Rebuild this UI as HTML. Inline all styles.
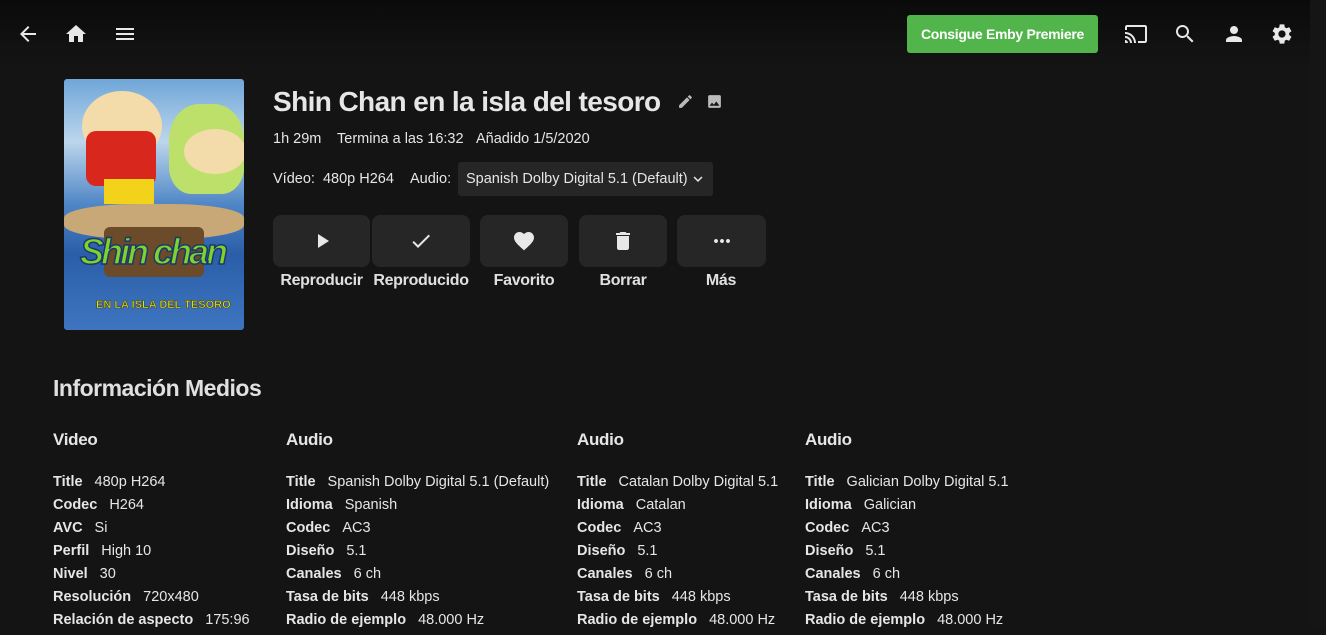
<!DOCTYPE html>
<html><head><meta charset="utf-8"><style>
*{margin:0;padding:0;box-sizing:border-box}
body{width:1326px;height:627px;overflow:hidden;background:#141414;color:#e6e6e6;font-family:"Liberation Sans",sans-serif;position:relative}
.hdr{position:absolute;left:0;top:0;width:1310px;height:70px;background:linear-gradient(#0a0a0a,#111 60%,#141414)}
.strip{position:absolute;left:1310px;top:0;width:16px;height:627px;background:#151515}
.ic{position:absolute;width:24px;height:24px;fill:#e8e8e8}
.ab{position:absolute;white-space:nowrap}
.prem{position:absolute;left:907px;top:15px;width:191px;height:38px;background:#52b54b;border-radius:3px;color:#fff;font-weight:bold;font-size:14px;text-align:center;line-height:38px;letter-spacing:-0.3px}
.btn{position:absolute;top:215px;height:52px;background:#262626;border-radius:8px}
.btn svg{position:absolute;left:50%;top:50%;width:24px;height:24px;margin:-12px 0 0 -12px;fill:#e8e8e8}
.lbl{position:absolute;top:272px;font-size:16px;font-weight:bold;color:#e0e0e0;text-align:center;letter-spacing:-0.3px}
.col{position:absolute;top:430px;font-size:14.5px}
.col h3{font-size:17px;font-weight:bold;margin-bottom:26px;height:18px;letter-spacing:-0.3px}
.col div{height:23px;line-height:17px}
.col b{margin-right:12px}
.m{position:absolute;font-size:14.5px;top:131px}
</style></head><body>
<div class="hdr"></div><div class="strip"></div>
<svg class="ic" style="left:16px;top:22px" viewBox="0 0 24 24"><path d="M20 11H7.83l5.59-5.59L12 4l-8 8 8 8 1.41-1.41L7.83 13H20v-2z"/></svg>
<svg class="ic" style="left:64px;top:22px" viewBox="0 0 24 24"><path d="M10 20v-6h4v6h5v-8h3L12 3 2 12h3v8z"/></svg>
<svg class="ic" style="left:113px;top:22px" viewBox="0 0 24 24"><path d="M3 18h18v-2H3v2zm0-5h18v-2H3v2zm0-7v2h18V6H3z"/></svg>
<div class="prem">Consigue Emby Premiere</div>
<svg class="ic" style="left:1124px;top:22px" viewBox="0 0 24 24"><path d="M21 3H3c-1.1 0-2 .9-2 2v3h2V5h18v14h-7v2h7c1.1 0 2-.9 2-2V5c0-1.1-.9-2-2-2zM1 18v3h3c0-1.66-1.34-3-3-3zm0-4v2c2.76 0 5 2.24 5 5h2c0-3.870-3.13-7-7-7zm0-4v2c4.97 0 9 4.03 9 9h2c0-6.08-4.93-11-11-11z"/></svg>
<svg class="ic" style="left:1173px;top:22px" viewBox="0 0 24 24"><path d="M15.5 14h-.79l-.28-.27C15.41 12.59 16 11.11 16 9.5 16 5.910 13.09 3 9.5 3S3 5.91 3 9.5 5.91 16 9.5 16c1.61 0 3.09-.59 4.230-1.57l.27.28v.79l5 4.99L20.49 19l-4.99-5zm-6 0C7.01 14 5 11.99 5 9.5S7.01 5 9.5 5 14 7.01 14 9.5 11.99 14 9.5 14z"/></svg>
<svg class="ic" style="left:1222px;top:22px" viewBox="0 0 24 24"><path d="M12 12c2.21 0 4-1.79 4-4s-1.79-4-4-4-4 1.79-4 4 1.79 4 4 4zm0 2c-2.67 0-8 1.34-8 4v2h16v-2c0-2.66-5.33-4-8-4z"/></svg>
<svg class="ic" style="left:1270px;top:22px" viewBox="0 0 24 24"><path d="M19.14 12.94c.04-.3.06-.61.06-.94 0-.32-.02-.64-.07-.94l2.03-1.58a.49.49 0 00.12-.61l-1.92-3.32a.488.488 0 00-.59-.22l-2.39.96c-.5-.38-1.03-.7-1.62-.94l-.36-2.54a.484.484 0 00-.48-.41h-3.84c-.24 0-.43.17-.47.41l-.36 2.54c-.59.24-1.130.57-1.62.94l-2.39-.96c-.22-.08-.47 0-.59.22L2.740 8.87c-.12.21-.08.47.12.61l2.03 1.58c-.05.3-.09.63-.09.94s.02.64.07.94l-2.03 1.58a.49.49 0 00-.12.61l1.92 3.32c.12.22.37.29.59.22l2.39-.96c.5.38 1.03.7 1.62.94l.36 2.54c.05.24.24.41.48.41h3.84c.24 0 .44-.17.47-.41l.36-2.54c.59-.24 1.13-.56 1.62-.94l2.39.96c.22.08.47 0 .59-.22l1.92-3.32c.12-.22.07-.47-.12-.61l-2.01-1.58zM12 15.6c-1.98 0-3.6-1.62-3.6-3.6s1.62-3.6 3.6-3.6 3.6 1.62 3.6 3.6-1.62 3.6-3.6 3.6z"/></svg>

<!-- poster -->
<div class="ab" style="left:64px;top:79px;width:180px;height:251px;border-radius:3px;overflow:hidden;background:linear-gradient(#6fa6d8 0%,#bcd6ec 25%,#4f86c6 50%,#2a5ea8 70%,#3f75c0 100%)">
 <div class="ab" style="left:18px;top:12px;width:80px;height:70px;border-radius:50%;background:#f3dcaa"></div>
 <div class="ab" style="left:22px;top:52px;width:70px;height:55px;background:#d8281e;border-radius:10px"></div>
 <div class="ab" style="left:40px;top:100px;width:50px;height:25px;background:#f2d21a"></div>
 <div class="ab" style="left:105px;top:25px;width:75px;height:90px;border-radius:40% 40% 30% 30%;background:#bde06a"></div>
 <div class="ab" style="left:120px;top:50px;width:62px;height:45px;border-radius:50%;background:#f3dcaa"></div>
 <div class="ab" style="left:0;top:125px;width:180px;height:35px;background:#c9a877;border-radius:40%"></div>
 <div class="ab" style="left:40px;top:148px;width:100px;height:50px;background:#6b4b2a;border-radius:6px"></div>
 <div class="ab" style="left:16px;top:152px;font:italic bold 36px 'Liberation Sans',sans-serif;color:#7fd12e;letter-spacing:-3px;-webkit-text-stroke:1.5px #1a3a6a">Shin chan</div>
 <div class="ab" style="left:32px;top:220px;font:bold 11px 'Liberation Sans',sans-serif;color:#d9e22b;-webkit-text-stroke:0.5px #4a3a10">EN LA ISLA DEL TESORO</div>
</div>

<div class="ab" style="left:273px;top:86px;font-size:28px;font-weight:bold;color:#e6e6e6;letter-spacing:-0.6px">Shin Chan en la isla del tesoro</div>
<svg class="ic" style="left:677px;top:93px;width:17px;height:17px;fill:#bbb" viewBox="0 0 24 24"><path d="M3 17.25V21h3.75L17.81 9.94l-3.75-3.75L3 17.25zM20.71 7.04a1 1 0 000-1.41l-2.34-2.34a1 1 0 00-1.41 0l-1.83 1.83 3.75 3.75 1.83-1.83z"/></svg>
<svg class="ic" style="left:706px;top:93px;width:17px;height:17px;fill:#bbb" viewBox="0 0 24 24"><path d="M21 19V5c0-1.1-.9-2-2-2H5c-1.1 0-2 .9-2 2v14c0 1.1.9 2 2 2h14c1.1 0 2-.9 2-2zM8.5 13.5l2.5 3.01L14.5 12l4.5 6H5l3.5-4.5z"/></svg>
<div class="m ab" style="left:273px">1h 29m</div>
<div class="m ab" style="left:337px">Termina a las 16:32</div>
<div class="m ab" style="left:476px">Añadido 1/5/2020</div>
<div class="ab" style="left:273px;top:171px;font-size:14.5px">Vídeo:&nbsp;&nbsp;480p H264</div>
<div class="ab" style="left:410px;top:171px;font-size:14.5px">Audio:</div>
<div class="ab" style="left:458px;top:162px;width:255px;height:34px;background:#262626;border-radius:3px;font-size:14.5px;line-height:34px;padding-left:8px">Spanish Dolby Digital 5.1 (Default)
<svg style="position:absolute;right:6px;top:8px;width:18px;height:18px;fill:#e6e6e6" viewBox="0 0 24 24"><path d="M7.41 8.59L12 13.17l4.59-4.58L18 10l-6 6-6-6 1.41-1.41z"/></svg></div>

<div class="btn" style="left:273px;width:97px"><svg viewBox="0 0 24 24"><path d="M8 5v14l11-7z"/></svg></div>
<div class="btn" style="left:372px;width:98px"><svg viewBox="0 0 24 24"><path d="M9 16.17L4.83 12l-1.42 1.41L9 19 21 7l-1.41-1.41z"/></svg></div>
<div class="btn" style="left:480px;width:88px"><svg viewBox="0 0 24 24"><path d="M12 21.35l-1.45-1.32C5.4 15.36 2 12.28 2 8.5 2 5.42 4.42 3 7.5 3c1.74 0 3.41.81 4.5 2.09C13.09 3.81 14.76 3 16.5 3 19.58 3 22 5.42 22 8.5c0 3.78-3.4 6.86-8.55 11.54L12 21.35z"/></svg></div>
<div class="btn" style="left:579px;width:88px"><svg viewBox="0 0 24 24"><path d="M6 19c0 1.1.9 2 2 2h8c1.1 0 2-.9 2-2V7H6v12zM19 4h-3.5l-1-1h-5l-1 1H5v2h14V4z"/></svg></div>
<div class="btn" style="left:677px;width:89px"><svg viewBox="0 0 24 24"><path d="M6 10c-1.1 0-2 .9-2 2s.9 2 2 2 2-.9 2-2-.9-2-2-2zm12 0c-1.1 0-2 .9-2 2s.9 2 2 2 2-.9 2-2-.9-2-2-2zm-6 0c-1.1 0-2 .9-2 2s.9 2 2 2 2-.9 2-2-.9-2-2-2z"/></svg></div>
<div class="lbl" style="left:266px;width:111px">Reproducir</div>
<div class="lbl" style="left:364px;width:114px">Reproducido</div>
<div class="lbl" style="left:474px;width:100px">Favorito</div>
<div class="lbl" style="left:573px;width:100px">Borrar</div>
<div class="lbl" style="left:671px;width:100px">Más</div>

<div class="ab" style="left:53px;top:375px;font-size:23px;font-weight:bold;color:#e0e0e0;letter-spacing:-0.5px">Información Medios</div>

<div class="col" style="left:53px"><h3>Video</h3>
<div><b>Title</b>480p H264</div><div><b>Codec</b>H264</div><div><b>AVC</b>Si</div><div><b>Perfil</b>High 10</div><div><b>Nivel</b>30</div><div><b>Resolución</b>720x480</div><div><b>Relación de aspecto</b>175:96</div></div>
<div class="col" style="left:286px"><h3>Audio</h3>
<div><b>Title</b>Spanish Dolby Digital 5.1 (Default)</div><div><b>Idioma</b>Spanish</div><div><b>Codec</b>AC3</div><div><b>Diseño</b>5.1</div><div><b>Canales</b>6 ch</div><div><b>Tasa de bits</b>448 kbps</div><div><b>Radio de ejemplo</b>48.000 Hz</div></div>
<div class="col" style="left:577px"><h3>Audio</h3>
<div><b>Title</b>Catalan Dolby Digital 5.1</div><div><b>Idioma</b>Catalan</div><div><b>Codec</b>AC3</div><div><b>Diseño</b>5.1</div><div><b>Canales</b>6 ch</div><div><b>Tasa de bits</b>448 kbps</div><div><b>Radio de ejemplo</b>48.000 Hz</div></div>
<div class="col" style="left:805px"><h3>Audio</h3>
<div><b>Title</b>Galician Dolby Digital 5.1</div><div><b>Idioma</b>Galician</div><div><b>Codec</b>AC3</div><div><b>Diseño</b>5.1</div><div><b>Canales</b>6 ch</div><div><b>Tasa de bits</b>448 kbps</div><div><b>Radio de ejemplo</b>48.000 Hz</div></div>
</body></html>
